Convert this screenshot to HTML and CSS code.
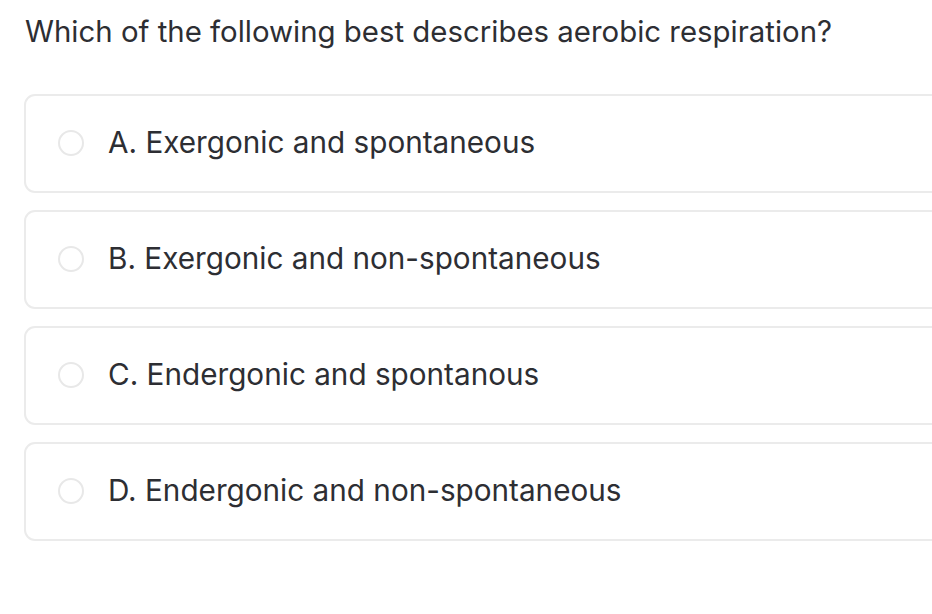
FILE: index.html
```html
<!DOCTYPE html>
<html>
<head>
<meta charset="utf-8">
<link rel="stylesheet" href="styles.css">
</head>
<body>
<div class="page">
  <h1 class="question">Which of the following best describes aerobic respiration?</h1>
  <div class="options">
    <label class="option"><span class="radio"></span><span class="label">A. Exergonic and spontaneous</span></label>
    <label class="option"><span class="radio"></span><span class="label">B. Exergonic and non-spontaneous</span></label>
    <label class="option"><span class="radio"></span><span class="label">C. Endergonic and spontanous</span></label>
    <label class="option"><span class="radio"></span><span class="label">D. Endergonic and non-spontaneous</span></label>
  </div>
</div>
</body>
</html>
```
FILE: styles.css
```css
html, body {
  margin: 0;
  padding: 0;
  background: #ffffff;
  overflow: hidden;
}
body {
  font-family: "Inter", "Liberation Sans", sans-serif;
  color: #2d2e33;
}
.page {
  padding: 13px 0 0 24px;
}
.question {
  margin: 0 0 0 1px;
  font-size: 29.4px;
  font-weight: 400;
  line-height: 38px;
}
.options {
  margin-top: 43px;
  margin-right: -30px;
  display: flex;
  flex-direction: column;
  gap: 17px;
}
.option {
  display: flex;
  align-items: center;
  height: 99px;
  box-sizing: border-box;
  border: 2px solid #ebebeb;
  border-radius: 11px;
  padding-left: 32px;
}
.radio {
  width: 26px;
  height: 26px;
  box-sizing: border-box;
  border: 2px solid #e8e8e8;
  border-radius: 50%;
  flex: none;
  margin-right: 24px;
  margin-top: -2px;
}
.label {
  font-size: 29.7px;
  line-height: 34px;
  margin-top: -3px;
}
```
